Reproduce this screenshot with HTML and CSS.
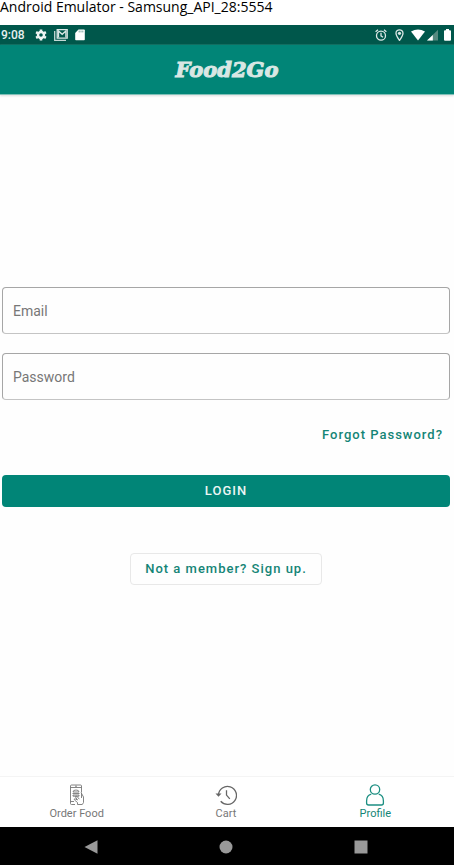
FILE: index.html
```html
<!DOCTYPE html>
<html lang="en">
<head>
<meta charset="utf-8">
<meta name="viewport" content="width=device-width, initial-scale=1">
<title>Food2Go</title>
<link rel="stylesheet" href="styles.css">
</head>
<body>
<div class="window-title">Android Emulator - Samsung_API_28:5554</div>
<div class="status-bar">
  <span class="clock">9:08</span>
  <div class="status-notices">
    <svg width="12" height="12" viewBox="0 0 12 12"><g fill="none" stroke="#f0f5f4"><circle cx="6" cy="6" r="3" stroke-width="2.4"/><path d="M6 0.4v1.8M6 9.8v1.8M1.1 3.2l1.6.9M9.3 7.9l1.6.9M1.1 8.8l1.6-.9M9.3 4.1l1.6-.9" stroke-width="2.6"/></g></svg>
    <svg width="14" height="12" viewBox="0 0 14 12"><path d="M.7 2v9.3H12" fill="none" stroke="#c5d8d5" stroke-width="1.3"/><path d="M3.2.7h10v8.4h-10z" fill="none" stroke="#dce8e6" stroke-width="1.3"/><path d="M4.500 8.500V2l3.700 3.300L11.900 2v6.500" fill="none" stroke="#dce8e6" stroke-width="1.300"/></svg>
    <svg width="10" height="12" viewBox="0 0 10 12"><path d="M3.5.5H9q.8 0 .8.8v9.2q0 .8-.8.8H1q-.8 0-.8-.8V4z" fill="#fff"/><path d="M4.2 1.6v1.8M6 1.6v1.8M7.8 1.6v1.8" stroke="#5b8e86" stroke-width=".8"/></svg>
  </div>
  <div class="status-system">
    <svg width="12" height="12" viewBox="0 0 12 12"><g fill="none" stroke="#dce8e6" stroke-width="1.3"><circle cx="6" cy="6.7" r="4.5"/><path d="M6 3.8v3.1l2 1.3M.6 2.7L3 .7M11.4 2.7L9 .7"/></g></svg>
    <svg class="pin" width="9" height="12" viewBox="0 0 9 12"><path d="M4.5 11.3C3 9.2 1 6.8 1 4.3a3.5 3.5 0 0 1 7 0c0 2.500-2 4.900-3.500 7z" fill="none" stroke="#dce8e6" stroke-width="1.3"/><circle cx="4.500" cy="4.300" r="1.600" fill="#dce8e6"/></svg>
    <svg width="14" height="12" viewBox="0 0 14 12"><path d="M0 2.500Q7-1.500 14 2.500L7 11.500z" fill="#fff"/></svg>
    <svg class="signal" width="11" height="12" viewBox="0 0 11 12"><path d="M0 11.500L11 .8v10.700z" fill="#56897f"/><path d="M0 11.500L5.800 5.900v5.600z" fill="#fff"/></svg>
    <svg class="battery" width="7" height="12" viewBox="0 0 7 12"><path d="M2 0h3v1.200h1q1 0 1 1v8.600q0 1-1 1H1q-1 0-1-1V2.200q0-1 1-1h1z" fill="#fff"/></svg>
  </div>
</div>
<header class="app-bar"><h1 class="brand">Food2Go</h1></header>
<main class="content">
  <form class="login-form">
    <input class="field" type="email" placeholder="Email" aria-label="Email">
    <input class="field" type="password" placeholder="Password" aria-label="Password">
    <button class="button forgot" type="button">Forgot Password?</button>
    <button class="button login" type="button">LOGIN</button>
    <button class="button signup" type="button">Not a member? Sign up.</button>
  </form>
</main>
<nav class="tabs">
  <a class="tab" href="#order">
    <svg width="22" height="22" viewBox="0 0 22 22"><g fill="none" stroke="#777" stroke-width=".9"><path d="M9 20.500H5.500q-1 0-1-1V2q0-1 1-1h9q1 0 1 1v6.500M4.500 3.500h11M4.500 17.500H8M9 2.200h2"/><path d="M7 8q0-2 3-2t3 2zM6.500 9.500h7M7 11h6v1.200H7z"/><path d="M11.500 20.500v-2l-3-2.500q-.8-1 .4-1.300l2.600 1.300-2-3q0-1.400 1.300-.8l2.500 3M15 8.500l2.500 4.500v5.500l-1.200 2h-4.800M15.500 9v5"/></g></svg>
    <span>Order Food</span>
  </a>
  <a class="tab" href="#cart">
    <svg width="22" height="22" viewBox="0 0 22 22"><g fill="none" stroke="#666" stroke-width="1.300"><path d="M3.500 11a9 9 0 1 1 2.200 6.300M11.500 6.200v4.900l3.300 3.800"/></g><path d="M.5 9.500h6L3.500 12.800z" fill="#666"/></svg>
    <span>Cart</span>
  </a>
  <a class="tab active" href="#profile">
    <svg width="22" height="22" viewBox="0 0 22 22"><g fill="none" stroke="#1c8f82" stroke-width="1.300"><circle cx="11" cy="5.500" r="4.700"/><path d="M7.300 10.200C4 11 2.600 13.700 2.600 17v2q0 2 2 2h12.800q2 0 2-2v-2c0-3.300-1.400-6-4.700-6.800"/></g></svg>
    <span>Profile</span>
  </a>
</nav>
<div class="system-nav">
  <button class="key" type="button" aria-label="Back"><svg width="14" height="14" viewBox="0 0 14 14"><path d="M.5 7L13.500.3v13.400z"/></svg></button>
  <button class="key" type="button" aria-label="Home"><svg width="14" height="14" viewBox="0 0 14 14"><circle cx="7" cy="7" r="6.500"/></svg></button>
  <button class="key" type="button" aria-label="Recent apps"><svg width="14" height="14" viewBox="0 0 14 14"><path d="M.5.500h13v13H.5z"/></svg></button>
</div>
</body>
</html>
```
FILE: styles.css
```css
* {
  box-sizing: border-box;
}

body {
  margin: 0;
  min-height: 100vh;
  display: flex;
  flex-direction: column;
  background: #fefefe;
  font-family: Roboto, "Liberation Sans", sans-serif;
}

svg {
  display: block;
}

.window-title {
  height: 25px;
  background: #fff;
  color: #000;
  font: 14px/14px "Open Sans", "Noto Sans", sans-serif;
  white-space: nowrap;
}

.status-bar {
  height: 20px;
  display: flex;
  align-items: center;
  padding: 0 3px 0 1px;
  background: #00574b;
  border-bottom: 1px solid #036658;
}

.clock {
  color: #e8f0ef;
  font-size: 12px;
  font-weight: 500;
}

.status-notices {
  display: flex;
  gap: 7px;
  margin-left: 10px;
}

.status-system {
  display: flex;
  align-items: center;
  margin-left: auto;
}

.pin {
  margin: 0 7px 0 8px;
}

.signal {
  margin-left: 2px;
}

.battery {
  margin-left: 6px;
}

.app-bar {
  height: 50px;
  display: flex;
  align-items: center;
  justify-content: center;
  background: #018577;
  border-bottom: 1px solid #80c0b8;
  box-shadow: 0 1px 2px #ddd;
}

.brand {
  margin: 0;
  color: #d9e7e4;
  font: italic bold 21px/24px "DejaVu Serif", serif;
  -webkit-text-stroke: 1px #d9e7e4;
}

.content {
  flex: 1;
  display: flex;
  flex-direction: column;
  justify-content: center;
  padding: 1px 4px 0 2px;
}

.login-form {
  display: flex;
  flex-direction: column;
}

.field {
  width: 100%;
  height: 47px;
  margin-bottom: 19px;
  padding: 0 10px;
  border: 1px solid #a6a6a6;
  border-bottom-color: #c4c4c4;
  border-radius: 4px;
  background: transparent;
  color: #333;
  font: 14px/18px Roboto, sans-serif;
}

.field::placeholder {
  color: #777;
  opacity: 1;
}

.button {
  height: 32px;
  padding: 0 14px;
  border: 0;
  border-radius: 4px;
  background: transparent;
  color: #148576;
  font: 500 13px/16px Roboto, sans-serif;
  letter-spacing: 1px;
}

.forgot {
  align-self: flex-end;
  padding: 0 7px;
}

.login {
  margin: 24px 0 46px;
  background: #018577;
  color: #edf5f4;
}

.signup {
  align-self: center;
  border: 1px solid #e8e8e8;
}

.tabs {
  height: 51px;
  display: grid;
  grid-template-columns: repeat(3, 1fr);
  padding: 0 4px 0 2px;
  border-top: 1px solid #f4f4f4;
  background: #fff;
}

.tab {
  display: flex;
  flex-direction: column;
  align-items: center;
  padding-top: 7px;
  color: #777;
  font-size: 11px;
  line-height: 16px;
  text-decoration: none;
}

.tab.active {
  color: #148576;
}

.system-nav {
  height: 38px;
  display: flex;
  align-items: center;
  justify-content: center;
  gap: 121px;
  padding: 2px 3px 0 0;
  background: #000;
}

.key {
  padding: 0;
  border: 0;
  background: none;
  fill: #999;
}
```
